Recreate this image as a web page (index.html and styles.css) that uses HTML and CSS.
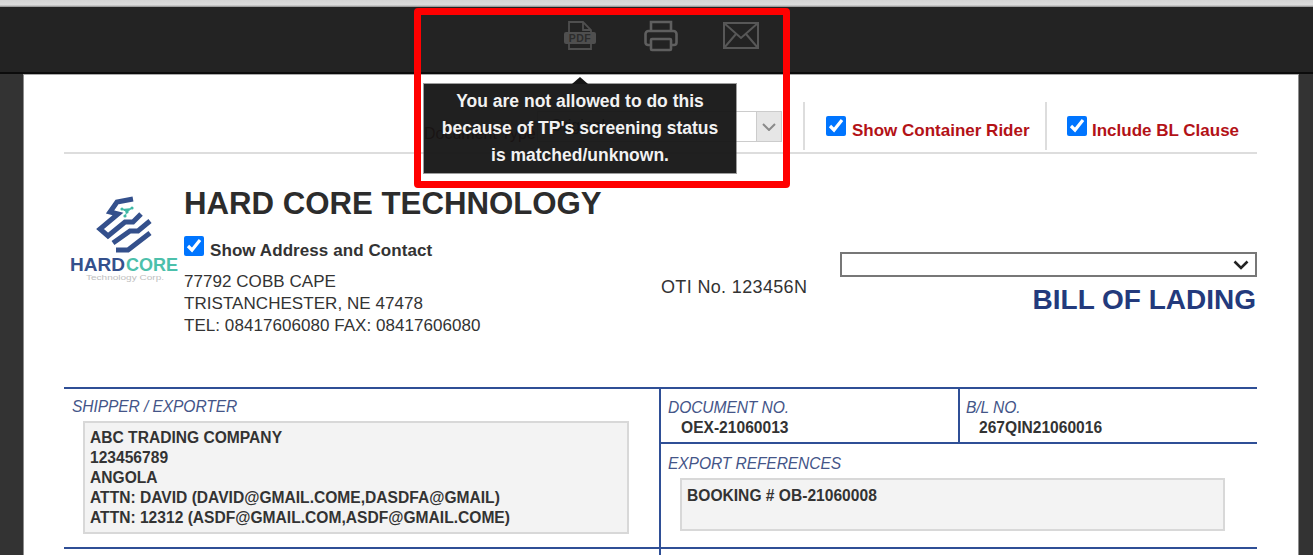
FILE: index.html
```html
<!DOCTYPE html>
<html lang="en">
<head>
<meta charset="utf-8">
<title>Bill of Lading</title>
<link rel="stylesheet" href="styles.css">
</head>
<body>
<div class="topstrip"></div>
<header class="toolbar">
  <svg class="ico ico-pdf" viewBox="0 0 32 30" fill="none" stroke="#4f4f4f" stroke-width="1.800">
    <path d="M5 12V2h14l8 8v2M5 24v5h22v-5M19 2v8h8"/>
    <rect x="0" y="12" width="32" height="12" rx="2" fill="#4f4f4f" stroke="none"/>
    <text x="16" y="22" text-anchor="middle" class="pdf-text">PDF</text>
  </svg>
  <svg class="ico ico-print" viewBox="0 0 34 32" fill="none" stroke="#5f5f5f" stroke-width="2.600">
    <path d="M7 11V2h20v9"/>
    <path d="M7 25H4a2.500 2.500 0 0 1-2.500-2.500V14A3 3 0 0 1 4.500 11h25a3 3 0 0 1 3 3v8.500A2.500 2.500 0 0 1 30 25h-3"/>
    <rect x="7" y="19" width="20" height="11" rx="1"/>
  </svg>
  <svg class="ico ico-mail" viewBox="0 0 36 27" fill="none" stroke="#575757" stroke-width="2">
    <rect x="1" y="1" width="34" height="25"/>
    <path d="M1 1l17 15L35 1M1 26l12-14M35 26L23 12"/>
  </svg>
</header>
<main class="workspace">
  <section class="sheet">
    <div class="controls">
      <span class="doc-label">Document Type</span>
      <span class="fake-select"><span class="fake-value">Original</span><span class="fake-btn"><svg viewBox="0 0 14 8" width="14" height="8" fill="none" stroke="#8a8a8a" stroke-width="2"><path d="M1 1l6 6 6-6"/></svg></span></span>
      <span class="sep sep-a"></span>
      <label class="red-check rider"><input type="checkbox" checked><span>Show Container Rider</span></label>
      <span class="sep sep-b"></span>
      <label class="red-check clause"><input type="checkbox" checked><span>Include BL Clause</span></label>
    </div>
    <div class="company">
      <svg class="logo" viewBox="64 190 116 100">
        <g fill="none" stroke="#34508c" stroke-width="5">
          <path d="M133 199L117 202L110 212L118 214L100 229L108 236L125 222L133 222L141 214"/>
          <path d="M113 243L130 231L138 231L150 221"/>
          <path d="M116 250L128 250L150 233"/>
        </g>
        <g fill="#3fb8a5"><circle cx="122" cy="209" r="1.600"/><circle cx="127" cy="212" r="1.600"/><circle cx="132" cy="208" r="1.600"/><circle cx="125" cy="216" r="1.600"/><path d="M122 209L127 212L132 208M127 212L125 216" stroke="#3fb8a5" stroke-width="1"/></g>
        <text x="70" y="271" class="logo-hard" textLength="55" lengthAdjust="spacingAndGlyphs">HARD</text>
        <text x="126" y="271" class="logo-core" textLength="52" lengthAdjust="spacingAndGlyphs">CORE</text>
        <text x="86" y="280" class="logo-sub" textLength="78" lengthAdjust="spacingAndGlyphs">Technology Corp.</text>
      </svg>
      <div class="company-info">
        <h1>HARD CORE TECHNOLOGY</h1>
        <label class="addr-check"><input type="checkbox" checked><span>Show Address and Contact</span></label>
        <p class="address">77792 COBB CAPE<br>TRISTANCHESTER, NE 47478<br>TEL: 08417606080 FAX: 08417606080</p>
      </div>
      <div class="oti">OTI No. 123456N</div>
      <div class="title-col">
        <div class="select-wrap">
          <select class="bl-select"><option></option></select>
          <svg class="select-chev" viewBox="0 0 16 10" fill="none" stroke="#222" stroke-width="2.600"><path d="M1.500 1.500L8 8l6.500-6.500"/></svg>
        </div>
        <h2>BILL OF LADING</h2>
      </div>
    </div>
    <div class="form-grid">
      <div class="cell shipper">
        <div class="cap">SHIPPER / EXPORTER</div>
        <div class="box box-shipper">ABC TRADING COMPANY<br>123456789<br>ANGOLA<br>ATTN: DAVID (DAVID@GMAIL.COME,DASDFA@GMAIL)<br>ATTN: 12312 (ASDF@GMAIL.COM,ASDF@GMAIL.COME)</div>
      </div>
      <div class="right-col">
        <div class="nums">
          <div class="cell num doc"><div class="cap">DOCUMENT NO.</div><div class="val">OEX-21060013</div></div>
          <div class="cell num bl"><div class="cap">B/L NO.</div><div class="val">267QIN21060016</div></div>
        </div>
        <div class="cell refs">
          <div class="cap">EXPORT REFERENCES</div>
          <div class="box box-refs">BOOKING # OB-21060008</div>
        </div>
      </div>
    </div>
    <div class="grid-rest"></div>
  </section>
</main>
<div class="tooltip"><span class="tip-arrow"></span>You are not allowed to do this<br>because of TP's screening status<br>is matched/unknown.</div>
<div class="highlight"></div>
</body>
</html>
```

FILE: styles.css
```css
* { box-sizing: border-box; }
html, body { margin: 0; height: 555px; overflow: hidden; }
body { background: #333; font-family: "Liberation Sans", Arial, sans-serif; color: #333; position: relative; }

.topstrip { height: 7px; background: linear-gradient(#d4d4d4 0, #dcdcdc 70%, #8a8a8a 100%); }
.toolbar { height: 67px; background: #232323; border-bottom: 2px solid #0c0c0c; display: flex; align-items: flex-start; padding: 13px 0 0 564px; }
.ico { display: block; flex: none; }
.ico-pdf { width: 32px; height: 30px; }
.ico-print { width: 34px; height: 32px; margin-left: 48px; }
.ico-mail { width: 36px; height: 27px; margin-left: 45px; margin-top: 2px; }
.pdf-text { font: bold 10.500px "Liberation Sans", sans-serif; fill: #2c2c2c; stroke: none; letter-spacing: .5px; }

.workspace { padding: 0 14px 0 23px; height: 481px; }
.sheet { background: #fff; border-left: 1px solid #8d8d8d; border-top: 1px solid #aaa; border-right: 1px solid #8d8d8d; height: 481px; padding: 0 41px 0 40px; overflow: hidden; }

.controls { height: 79px; border-bottom: 2px solid #ddd; display: flex; align-items: flex-end; font-weight: bold; font-size: 17px; }
.doc-label { color: #7d1515; font-weight: normal; font-size: 16px; margin: 0 0 9px 360px; width: 113px; white-space: nowrap; }
.fake-select { display: flex; width: 245px; height: 31px; border: 1px solid #ccc; margin-bottom: 10px; font-weight: normal; font-size: 16px; }
.fake-value { flex: 1; padding: 5px 12px; }
.fake-btn { width: 25px; background: #e6e6e6; border-left: 1px solid #ccc; display: flex; align-items: center; justify-content: center; }
.sep { width: 2px; height: 48px; background: #ddd; margin-bottom: 2px; }
.sep-a { margin-left: 21px; }
.red-check { display: flex; align-items: flex-start; align-self: flex-start; color: #b31217; white-space: nowrap; margin-top: 41px; line-height: 20px; }
.red-check input { width: 20px; height: 20px; margin: 0; accent-color: #0075ff; flex: none; }
.red-check span { margin-top: 5px; }
.rider { margin-left: 21px; width: 219px; gap: 6px; }
.clause { margin-left: 20px; gap: 5px; }

.company { display: flex; height: 233px; }
.logo { width: 116px; height: 100px; margin: 36px 4px 0 0; flex: none; }
.logo-hard { font: bold 19px "Liberation Sans", sans-serif; fill: #34508c; }
.logo-core { font: bold 19px "Liberation Sans", sans-serif; fill: #4cc0ab; }
.logo-sub { font: 7.500px "Liberation Sans", sans-serif; fill: #c0c0c0; }
.company-info { width: 477px; flex: none; }
h1 { margin: 32px 0 0; font-size: 31.200px; line-height: 36px; color: #2c2c2c; font-weight: bold; white-space: nowrap; }
.addr-check { display: flex; align-items: flex-start; gap: 6px; margin-top: 14px; font-size: 17px; font-weight: bold; height: 24px; line-height: 20px; letter-spacing: .08px; }
.addr-check input { width: 20px; height: 20px; margin: 0; accent-color: #0075ff; flex: none; }
.addr-check span { margin-top: 5px; }
.address { margin: 11px 0 0; font-size: 17px; line-height: 22px; color: #333; letter-spacing: .05px; }
.oti { font-size: 18px; letter-spacing: .35px; margin-top: 123px; width: 179px; flex: none; white-space: nowrap; }
.title-col { flex: 1; display: flex; flex-direction: column; padding-top: 98px; }
.select-wrap { position: relative; height: 25px; }
.bl-select { display: block; appearance: none; height: 25px; width: 100%; background: #fff; border: 2px solid #777; border-radius: 0; font-size: 14px; }
.select-chev { position: absolute; right: 8px; top: 8px; width: 16px; height: 10px; }
h2 { margin: 7px 0 0; text-align: right; font-size: 28px; line-height: 31px; color: #233a7c; font-weight: bold; white-space: nowrap; padding-right: 1px; }

.form-grid { display: flex; height: 162px; border-top: 2px solid #2f4f96; border-bottom: 2px solid #2f4f96; }
.cap { font-size: 15.600px; font-style: italic; color: #445588; line-height: 16px; white-space: nowrap; letter-spacing: -.1px; }
.shipper { width: 595px; flex: none; padding: 10px 0 0 8px; }
.box { background: #f3f3f3; border: 2px solid #d8d8d8; font-size: 15.600px; font-weight: bold; color: #333; line-height: 20px; }
.box-shipper { width: 546px; height: 113px; margin: 6px 0 0 11px; padding: 5px 5px; white-space: nowrap; }
.right-col { flex: 1; border-left: 2px solid #2f4f96; display: flex; flex-direction: column; }
.nums { display: flex; height: 55px; border-bottom: 2px solid #2f4f96; }
.num { padding-top: 11px; }
.doc { width: 299px; flex: none; border-right: 2px solid #2f4f96; padding-left: 7px; }
.bl { flex: 1; padding-left: 6px; }
.val { font-size: 15.600px; font-weight: bold; margin: 4px 0 0 13px; line-height: 16px; color: #333; }
.refs { padding: 12px 0 0 7px; }
.box-refs { width: 545px; height: 53px; margin: 6px 0 0 12px; padding: 6px 5px; }
.grid-rest { margin-left: 595px; height: 10px; border-left: 2px solid #2f4f96; }

.tooltip { position: absolute; left: 424px; top: 84px; width: 312px; height: 89px; background: rgba(20, 20, 20, .95); color: #f2f2f2; font-size: 17.500px; font-weight: bold; line-height: 27px; text-align: center; padding-top: 4px; box-shadow: 0 0 0 1px rgba(60,60,60,.5); }
.tip-arrow { position: absolute; left: 148px; top: -7px; width: 0; height: 0; border-left: 8px solid transparent; border-right: 8px solid transparent; border-bottom: 7px solid #161616; }
.highlight { position: absolute; left: 414px; top: 8px; width: 376px; height: 180px; border: 7px solid #f00; border-radius: 4px; }
```
